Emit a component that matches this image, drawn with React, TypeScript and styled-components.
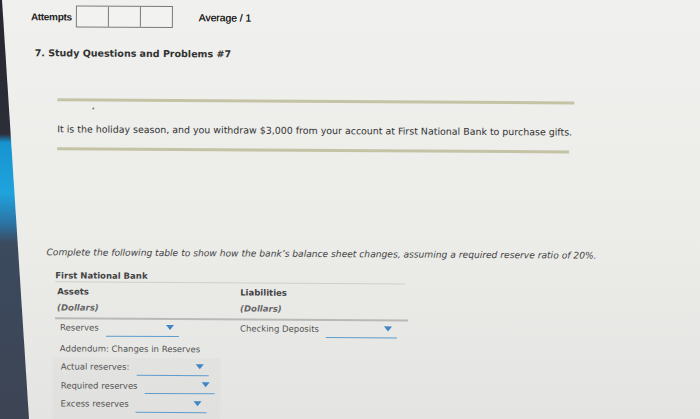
import React from 'react';
import styled, { createGlobalStyle } from 'styled-components';

const GlobalStyle = createGlobalStyle`
  html, body {
    margin: 0;
    padding: 0;
    background: #e9e9e7;
  }

  body {
    font-family: 'DejaVu Sans', Verdana, sans-serif;
  }
`;

function Dropdown({ width }: { width: number }) {
  return (
    <Select style={{ width }}>
      <Arrow />
    </Select>
  );
}

function App() {
  return (
    <Page>
      <GlobalStyle />
      <Bezel width="32" height="419" viewBox="0 0 32 419">
        <defs>
          <linearGradient id="bezel" x1="0" y1="0" x2="0" y2="1">
            <stop offset="0" stopColor="#26262e" />
            <stop offset="0.32" stopColor="#2c2e38" />
            <stop offset="0.34" stopColor="#1794d0" />
            <stop offset="0.46" stopColor="#1fa3dd" />
            <stop offset="0.53" stopColor="#2b76a8" />
            <stop offset="0.58" stopColor="#3b4a5e" />
            <stop offset="1" stopColor="#3d4454" />
          </linearGradient>
        </defs>
        <polygon points="0,0 2,0 29,419 0,419" fill="url(#bezel)" />
      </Bezel>

      <Content>
        <TopBar>
          <AttemptsLabel>Attempts</AttemptsLabel>
          <Boxes>
            <Box />
            <Box />
            <Box />
          </Boxes>
          <Average>Average / 1</Average>
        </TopBar>

        <Heading>7. Study Questions and Problems #7</Heading>

        <Question>
          <Rule $width={517} />
          <Dot />
          <Sentence>
            It is the holiday season, and you withdraw $3,000 from your account at First National Bank to
            purchase gifts.
          </Sentence>
          <Rule $width={512} />
        </Question>

        <Instructions>
          Complete the following table to show how the bank’s balance sheet changes, assuming a required reserve
          ratio of 20%.
        </Instructions>

        <Sheet>
          <BankName>First National Bank</BankName>
          <Columns>
            <Column $width={181}>
              <ColTitle>Assets</ColTitle>
              <ColUnit>(Dollars)</ColUnit>
            </Column>
            <Column>
              <ColTitle>Liabilities</ColTitle>
              <ColUnit>(Dollars)</ColUnit>
            </Column>
          </Columns>
          <Columns $line>
            <Column $width={181}>
              <Row $indent>
                <Label>Reserves</Label>
                <Dropdown width={73} />
              </Row>
            </Column>
            <Column>
              <Row>
                <Label>Checking Deposits</Label>
                <Dropdown width={71} />
              </Row>
            </Column>
          </Columns>

          <AddendumTitle>Addendum: Changes in Reserves</AddendumTitle>
          <Addendum>
            <Row $tall>
              <Label>Actual reserves:</Label>
              <Dropdown width={72} />
            </Row>
            <Row $tall>
              <Label>Required reserves</Label>
              <Dropdown width={70} />
            </Row>
            <Row $tall>
              <Label>Excess reserves</Label>
              <Dropdown width={71} />
            </Row>
          </Addendum>
        </Sheet>
      </Content>
    </Page>
  );
}

export default App;

const Page = styled.div`
  position: relative;
  width: 700px;
  height: 419px;
  overflow: hidden;
  background: linear-gradient(180deg, #f0f0ee 0%, #ecece9 55%, #e4e4e2 100%);
`;

const Bezel = styled.svg`
  position: absolute;
  left: 0;
  top: 0;
  pointer-events: none;
`;

const Content = styled.div`
  padding: 5px 0 0 31px;
  transform: rotate(0.35deg);
  transform-origin: 0 0;
`;

const TopBar = styled.div`
  display: flex;
  align-items: center;
  height: 22px;
  font-family: 'Liberation Sans', Arial, sans-serif;
  font-size: 10px;
  color: #222;
`;

const AttemptsLabel = styled.span`
  font-weight: 700;
  letter-spacing: -0.3px;
  margin-right: 4px;
`;

const Boxes = styled.div`
  display: flex;
  height: 22px;
  border: 1px solid #7a7a7a;
  box-sizing: border-box;
  background: #f2f2f0;
`;

const Box = styled.div`
  width: 31px;

  &:not(:first-child) {
    border-left: 1px solid #7a7a7a;
  }
`;

const Average = styled.span`
  margin-left: 26px;
  font-size: 10.3px;
  color: #1f1f1f;
  text-shadow: 0 0 0.3px #333;
`;

const Heading = styled.h1`
  margin: 20px 0 0 4px;
  font-size: 9.5px;
  font-weight: 700;
  line-height: 12px;
  color: #333;
`;

const Question = styled.div`
  margin: 39px 0 0 27px;
  display: flex;
  flex-direction: column;
`;

const Rule = styled.div<{ $width: number }>`
  width: ${({ $width }) => $width}px;
  height: 3px;
  background: #c4c3a6;
`;

const Dot = styled.span`
  width: 2px;
  height: 2px;
  margin: 6px 0 0 35px;
  border-radius: 50%;
  background: #777;
`;

const Sentence = styled.p`
  margin: 14px 0 12px;
  font-size: 9.45px;
  line-height: 12px;
  color: #333;
`;

const Instructions = styled.p`
  margin: 96px 0 0 17px;
  font-size: 9.15px;
  font-style: italic;
  line-height: 12px;
  color: #444;
`;

const Sheet = styled.div`
  margin: 11px 0 0 26px;
  width: 350px;
  font-size: 8.5px;
  color: #555;
`;

const BankName = styled.div`
  font-weight: 700;
  line-height: 12px;
  border-bottom: 1px solid #cfcfcd;
  color: #444;
`;

const Columns = styled.div<{ $line?: boolean }>`
  display: flex;
  border-top: ${({ $line }) => ($line ? '2px solid #b9b9b7' : 'none')};
  width: ${({ $line }) => ($line ? '353px' : 'auto')};
`;

const Column = styled.div<{ $width?: number }>`
  display: flex;
  flex-direction: column;
  padding-left: 2px;
  width: ${({ $width }) => ($width ? `${$width}px` : 'auto')};
  flex: ${({ $width }) => ($width ? 'none' : '1')};
`;

const ColTitle = styled.div`
  margin-top: 1px;
  font-weight: 700;
  line-height: 16px;
  color: #444;
`;

const ColUnit = styled.div`
  padding-bottom: 2px;
  font-weight: 700;
  font-style: italic;
  line-height: 16px;
  color: #666;
`;

const Row = styled.div<{ $tall?: boolean; $indent?: boolean }>`
  display: flex;
  align-items: center;
  gap: 7px;
  padding-left: ${({ $indent }) => ($indent ? '3px' : '0')};
  height: ${({ $tall }) => ($tall ? '18.5px' : '16px')};
`;

const Label = styled.span`
  white-space: nowrap;
  color: #555;
`;

const Select = styled.span`
  position: relative;
  display: inline-block;
  height: 12px;
  margin-top: 4px;
  border-bottom: 1px solid #5e9ccd;
`;

const Arrow = styled.span`
  position: absolute;
  right: 5px;
  top: 1px;
  width: 0;
  height: 0;
  border-left: 4px solid transparent;
  border-right: 4px solid transparent;
  border-top: 5px solid #3f86c4;
`;

const AddendumTitle = styled.div`
  margin: 6px 0 0 5px;
  line-height: 14px;
  color: #555;
`;

const Addendum = styled.div`
  margin: 2px 0 0 -2px;
  width: 160px;
  padding: 0 0 6px 8px;
  background: rgba(0, 0, 0, 0.015);
`;
